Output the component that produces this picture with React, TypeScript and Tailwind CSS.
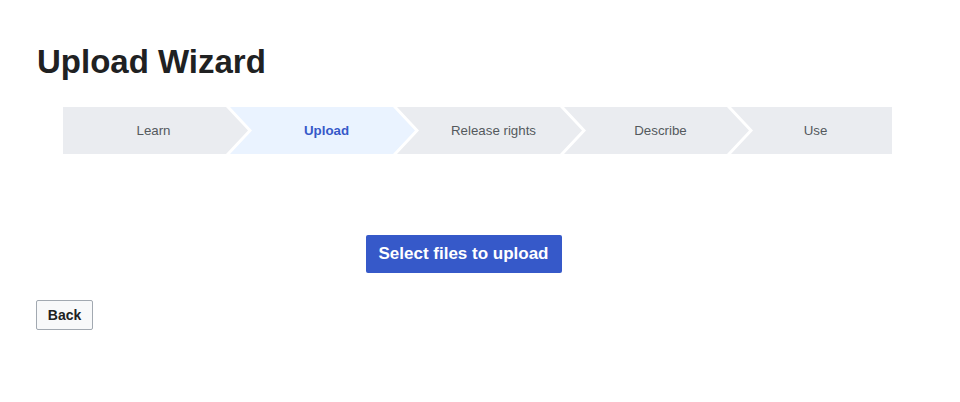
const steps = ['Learn', 'Upload', 'Release rights', 'Describe', 'Use'];

export default function App() {
  return (
    <div className="min-h-screen w-full bg-white pl-[37px] font-['Liberation_Sans',Arial,sans-serif] text-[#202122]">
      <h1 className="pt-[42px] text-[33px] font-bold leading-[40px]">Upload Wizard</h1>

      {/* Steps */}
      <div className="ml-[26px] mt-[25px] flex h-[47px]">
        {steps.map((step, i) => {
          const active = i === 1;
          const first = i === 0;
          const last = i === steps.length - 1;
          let shape = 'w-[185px] -ml-[18px] pl-[8px] [clip-path:polygon(0_0,163px_0,100%_50%,163px_100%,0_100%,22px_50%)]';
          if (first) shape = 'w-[185px] pr-[4px] [clip-path:polygon(0_0,163px_0,100%_50%,163px_100%,0_100%)]';
          if (last) shape = 'w-[161px] -ml-[18px] pl-[8px] [clip-path:polygon(0_0,100%_0,100%_100%,0_100%,22px_50%)]';
          return (
            <div
              key={step}
              className={`${shape} flex h-full items-center justify-center text-[13.3px] ${
                active ? 'bg-[#eaf3ff] font-bold text-[#3659c9]' : 'bg-[#eaecf0] text-[#54595d]'
              }`}
            >
              {step}
            </div>
          );
        })}
      </div>

      <div className="mt-[81px] flex w-[853px] justify-center">
        <button className="h-[38px] w-[196px] rounded-[2px] bg-[#3659c9] text-[17px] font-bold text-white">
          Select files to upload
        </button>
      </div>

      <button className="-ml-px mt-[27px] h-[30px] w-[57px] rounded-[2px] border border-[#a2a9b1] bg-[#f8f9fa] text-[14px] font-bold text-[#202122]">
        Back
      </button>
    </div>
  );
}
